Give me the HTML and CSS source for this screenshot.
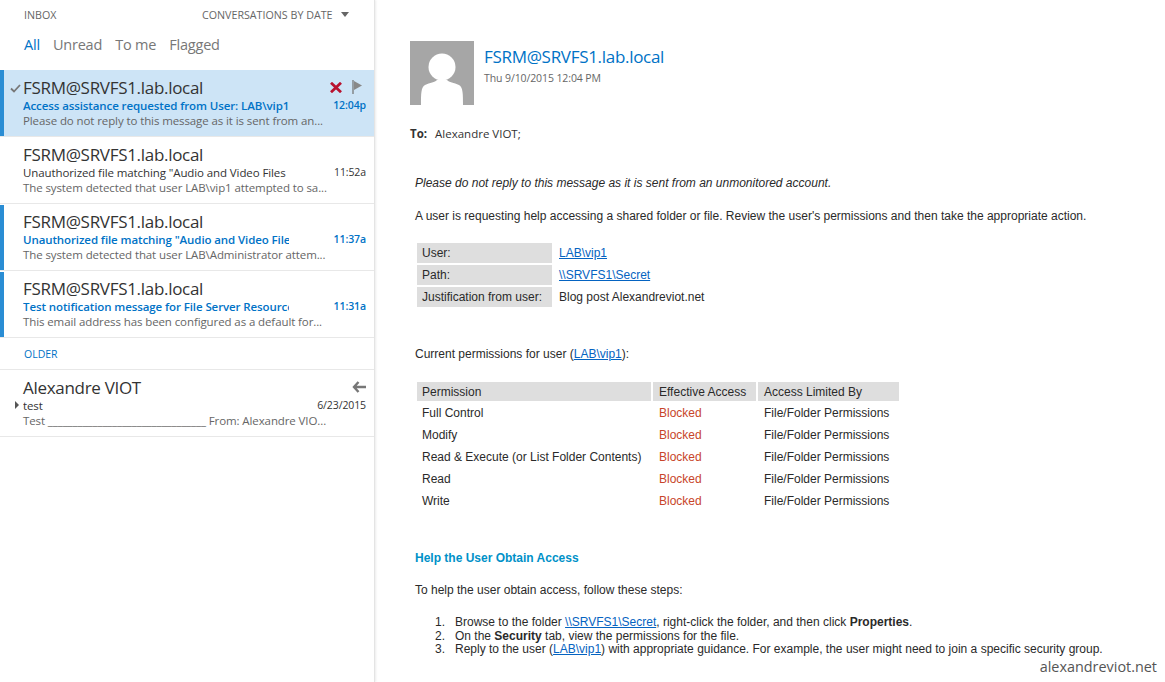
FILE: index.html
```html
<!DOCTYPE html>
<html lang="en">
<head>
  <meta charset="UTF-8">
  <title>Inbox</title>
  <link rel="stylesheet" href="styles.css">
</head>
<body>
  <div class="app">
    <div class="list-pane">
      <div class="list-top">
        <span class="folder">INBOX</span>
        <span class="sort">CONVERSATIONS BY DATE <i class="caret"></i></span>
      </div>
      <div class="filters">
        <span class="on">All</span>
        <span>Unread</span>
        <span>To me</span>
        <span>Flagged</span>
      </div>
      <div class="item selected">
        <svg class="check" width="11" height="9" viewBox="0 0 11 9"><path d="M1 4.500l3 3 6-6.500" fill="none" stroke="#777" stroke-width="1.800"/></svg>
        <div class="row-from">
          <span class="from">FSRM@SRVFS1.lab.local</span>
          <span class="actions">
            <svg width="12" height="11" viewBox="0 0 12 11"><path d="M1 .8l10 9.400M11 .8L1 10.200" stroke="#b8122f" stroke-width="2.800"/></svg>
            <svg width="10" height="14" viewBox="0 0 10 14"><path d="M1 0v14" stroke="#777" stroke-width="1.300"/><path d="M2 1l8 4.500-8 4.500z" fill="#888"/></svg>
          </span>
        </div>
        <div class="row-subj unread-subj"><span class="subj">Access assistance requested from User: LAB\vip1</span><span class="time">12:04p</span></div>
        <div class="preview">Please do not reply to this message as it is sent from an...</div>
      </div>
      <div class="item">
        <div class="row-from"><span class="from">FSRM@SRVFS1.lab.local</span></div>
        <div class="row-subj"><span class="subj">Unauthorized file matching "Audio and Video Files</span><span class="time">11:52a</span></div>
        <div class="preview">The system detected that user LAB\vip1 attempted to sa...</div>
      </div>
      <div class="item unread">
        <div class="row-from"><span class="from">FSRM@SRVFS1.lab.local</span></div>
        <div class="row-subj unread-subj"><span class="subj">Unauthorized file matching "Audio and Video Files</span><span class="time">11:37a</span></div>
        <div class="preview">The system detected that user LAB\Administrator attem...</div>
      </div>
      <div class="item unread">
        <div class="row-from"><span class="from">FSRM@SRVFS1.lab.local</span></div>
        <div class="row-subj unread-subj"><span class="subj">Test notification message for File Server Resource</span><span class="time">11:31a</span></div>
        <div class="preview">This email address has been configured as a default for...</div>
      </div>
      <div class="group">OLDER</div>
      <div class="item">
        <i class="expand"></i>
        <div class="row-from">
          <span class="from">Alexandre VIOT</span>
          <span class="actions reply">
            <svg width="14" height="12" viewBox="0 0 14 12"><path d="M6.500 1L2 6l4.500 5M2 6h12" fill="none" stroke="#777" stroke-width="2.400"/></svg>
          </span>
        </div>
        <div class="row-subj"><span class="subj">test</span><span class="time">6/23/2015</span></div>
        <div class="preview">Test ________________________________ From: Alexandre VIO...</div>
      </div>
    </div>

    <div class="read-pane">
      <div class="head">
        <div class="avatar">
          <svg width="64" height="64" viewBox="0 0 64 64"><circle cx="32" cy="26" r="13.500" fill="#fff"/><path d="M11 64c0-11 0-18 4-20 5-2.500 10-2.500 12-5h10c2 2.500 7 2.500 12 5 4 2 4 9 4 20z" fill="#fff"/></svg>
        </div>
        <div>
          <div class="sender">FSRM@SRVFS1.lab.local</div>
          <div class="sent">Thu 9/10/2015 12:04 PM</div>
        </div>
      </div>
      <div class="to"><b>To:</b><span>Alexandre VIOT;</span></div>

      <div class="mail">
        <p class="note">Please do not reply to this message as it is sent from an unmonitored account.</p>
        <p class="intro">A user is requesting help accessing a shared folder or file. Review the user's permissions and then take the appropriate action.</p>

        <table class="info">
          <tr><th>User:</th><td><a href="#">LAB\vip1</a></td></tr>
          <tr><th>Path:</th><td><a href="#">\\SRVFS1\Secret</a></td></tr>
          <tr><th>Justification from user:</th><td>Blog post Alexandreviot.net</td></tr>
        </table>

        <p class="current">Current permissions for user (<a href="#">LAB\vip1</a>):</p>

        <table class="perms">
          <tr><th class="c1">Permission</th><th class="c2">Effective Access</th><th class="c3">Access Limited By</th></tr>
          <tr><td>Full Control</td><td class="blocked">Blocked</td><td>File/Folder Permissions</td></tr>
          <tr><td>Modify</td><td class="blocked">Blocked</td><td>File/Folder Permissions</td></tr>
          <tr><td>Read &amp; Execute (or List Folder Contents)</td><td class="blocked">Blocked</td><td>File/Folder Permissions</td></tr>
          <tr><td>Read</td><td class="blocked">Blocked</td><td>File/Folder Permissions</td></tr>
          <tr><td>Write</td><td class="blocked">Blocked</td><td>File/Folder Permissions</td></tr>
        </table>

        <h3>Help the User Obtain Access</h3>
        <p class="steps-intro">To help the user obtain access, follow these steps:</p>
        <ol>
          <li>Browse to the folder <a href="#">\\SRVFS1\Secret</a>, right-click the folder, and then click <b>Properties</b>.</li>
          <li>On the <b>Security</b> tab, view the permissions for the file.</li>
          <li>Reply to the user (<a href="#">LAB\vip1</a>) with appropriate guidance. For example, the user might need to join a specific security group.</li>
        </ol>
      </div>
    </div>
    <div class="watermark">alexandreviot.net</div>
  </div>
</body>
</html>
```

FILE: styles.css
```css
html, body {
  margin: 0;
  height: 100%;
  background: #fff;
}
.app {
  position: relative;
  display: flex;
  height: 682px;
  overflow: hidden;
  font-family: "Open Sans", "Noto Sans", sans-serif;
  color: #333;
}

/* left list */
.list-pane {
  width: 374px;
  flex-shrink: 0;
  border-right: 1px solid #e4e4e4;
  box-shadow: 1px 0 2px rgba(0, 0, 0, 0.08);
}
.list-top {
  display: flex;
  height: 30px;
  padding-left: 24px;
  align-items: center;
  font-size: 10.700px;
  color: #666;
}
.folder {
  width: 178px;
}
.caret {
  display: inline-block;
  margin-left: 6px;
  vertical-align: 2px;
  border-left: 4.500px solid transparent;
  border-right: 4.500px solid transparent;
  border-top: 5px solid #666;
}
.filters {
  display: flex;
  gap: 13px;
  height: 40px;
  padding: 3px 0 0 24px;
  box-sizing: border-box;
  font-size: 14.500px;
  letter-spacing: -0.200px;
  line-height: 24px;
  color: #777;
}
.filters .on {
  color: #0072c6;
}
.item {
  position: relative;
  height: 67px;
  padding: 6px 8px 0 23px;
  box-sizing: border-box;
  border-bottom: 1px solid #e8e8e8;
}
.item.selected {
  background: #cde4f6;
  box-shadow: inset 4px 0 0 #2a8dd4;
}
.item.unread::before {
  content: "";
  position: absolute;
  left: 0;
  top: 1px;
  bottom: 0;
  width: 4px;
  background: #2a8dd4;
}
.check {
  position: absolute;
  left: 10px;
  top: 14px;
}
.expand {
  position: absolute;
  left: 15px;
  top: 31px;
  border-top: 4px solid transparent;
  border-bottom: 4px solid transparent;
  border-left: 4px solid #555;
}
.row-from {
  display: flex;
  justify-content: space-between;
  align-items: center;
  height: 22px;
}
.from {
  font-size: 17px;
  letter-spacing: -0.300px;
  color: #333;
  white-space: nowrap;
}
.actions {
  display: flex;
  gap: 10px;
  align-items: center;
  margin: 0 4px 0 0;
}
.actions.reply {
  margin: 0;
}
.row-subj {
  display: flex;
  justify-content: space-between;
  height: 15px;
  line-height: 15px;
  font-size: 11.500px;
  letter-spacing: -0.100px;
  color: #333;
}
.subj {
  width: 266px;
  overflow: hidden;
  white-space: nowrap;
}
.time {
  font-size: 10.500px;
}
.unread-subj {
  color: #0072c6;
  font-weight: 600;
}
.preview {
  height: 15px;
  line-height: 15px;
  font-size: 11.500px;
  letter-spacing: -0.100px;
  color: #666;
  white-space: nowrap;
}
.group {
  height: 32px;
  padding-left: 24px;
  box-sizing: border-box;
  line-height: 32px;
  font-size: 10.500px;
  color: #0072c6;
  border-bottom: 1px solid #e8e8e8;
}

/* reading pane */
.read-pane {
  flex: 1;
  padding: 41px 0 0 35px;
  min-width: 0;
}
.head {
  display: flex;
  gap: 10px;
}
.avatar {
  width: 64px;
  height: 64px;
  background: #a6a6a6;
  overflow: hidden;
}
.sender {
  margin-top: 4px;
  line-height: 24px;
  font-size: 17px;
  letter-spacing: -0.300px;
  color: #0072c6;
}
.sent {
  margin-top: 2px;
  line-height: 15px;
  font-size: 10.500px;
  letter-spacing: -0.100px;
  color: #666;
}
.to {
  display: flex;
  gap: 8px;
  margin-top: 20px;
  line-height: 17px;
  font-size: 11.500px;
  color: #333;
}
.mail {
  padding: 34px 0 0 5px;
  font-family: "Liberation Sans", Arial, sans-serif;
  font-size: 12px;
  line-height: 14px;
  color: #2a2a2a;
}
.mail p {
  margin: 0;
}
.mail a {
  color: #0563c1;
}
.note {
  font-style: italic;
}
.intro {
  padding-top: 19px;
}
.mail table {
  border-collapse: separate;
  border-spacing: 2px;
}
.info {
  margin: 18px 0 0 0;
}
.info th {
  width: 135px;
  height: 20px;
  padding: 0 0 0 5px;
  box-sizing: border-box;
  background: #dedede;
  font-weight: normal;
  text-align: left;
}
.info td {
  height: 20px;
  padding: 0 0 0 5px;
}
.current {
  padding-top: 38px;
}
.perms {
  margin-top: 19px;
}
.perms th {
  height: 19px;
  padding: 0 0 0 5px;
  box-sizing: border-box;
  background: #dedede;
  font-weight: normal;
  text-align: left;
}
.perms .c1 { width: 234px; }
.perms .c2 { width: 103px; }
.perms .c3 { width: 141px; }
.perms td {
  height: 20px;
  padding: 0 0 0 5px;
}
.perms th + th, .perms td + td {
  padding-left: 6px;
}
.mail .blocked {
  color: #c8452a;
}
.mail h3 {
  margin: 38px 0 0 0;
  font-size: 12px;
  line-height: 14px;
  color: #0091c8;
}
.steps-intro {
  padding-top: 18px;
}
.mail ol {
  margin: 19px 0 0 0;
  padding-left: 40px;
}
.mail li {
  line-height: 13.500px;
}
.mail li::marker {
  content: counter(list-item) ".   ";
}
.watermark {
  position: absolute;
  right: 8px;
  bottom: 5px;
  font-family: "Open Sans", sans-serif;
  font-size: 14.400px;
  line-height: 20px;
  background: rgba(255, 255, 255, 0.75);
  color: #555;
}
```
